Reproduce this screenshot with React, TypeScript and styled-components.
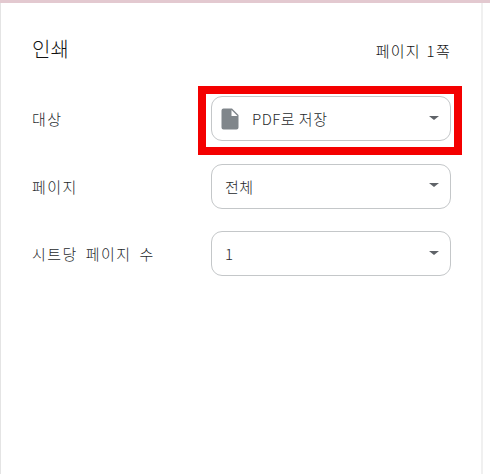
import styled, { createGlobalStyle } from 'styled-components'

const GlobalStyle = createGlobalStyle`
  html, body {
    margin: 0;
    background: #fff;
  }
  * {
    box-sizing: border-box;
  }
`

const Page = styled.div`
  width: 490px;
  height: 474px;
  overflow: hidden;
  display: flex;
  flex-direction: column;
  font-family: 'Noto Sans CJK KR', 'Liberation Sans', sans-serif;
  font-weight: 300;
  color: #26292c;
`

const TopBand = styled.div`
  height: 3px;
  background: #e3c9d0;
  flex-shrink: 0;
`

const Panel = styled.div`
  width: 483px;
  flex: 1;
  background: #fff;
  border-left: 1px solid #e4e4e4;
  border-right: 2px solid #f0f0f0;
  padding: 32px 30px 0 31px;
`

const Header = styled.header`
  display: flex;
  justify-content: space-between;
  align-items: center;
  height: 30px;
  margin-bottom: 31px;
`

const Title = styled.h1`
  margin: -4px 0 0;
  font-size: 20px;
  font-weight: 300;
  color: #111;
`

const PageCount = styled.span`
  font-size: 15px;
  letter-spacing: 1.3px;
  word-spacing: 1px;
  color: #111;
`

const Rows = styled.div`
  display: flex;
  flex-direction: column;
  gap: 22.5px;
`

const Row = styled.div`
  display: flex;
  align-items: center;
  justify-content: space-between;
  height: 45px;
`

const Label = styled.label`
  font-size: 15px;
  letter-spacing: 1.5px;
  word-spacing: 3px;
`

const SelectWrap = styled.div<{ $highlight?: boolean }>`
  position: relative;
  width: 240px;
  height: 45px;
  ${(p) =>
    p.$highlight &&
    `
    &::after {
      content: '';
      box-sizing: border-box;
      position: absolute;
      left: -13px;
      top: -10px;
      width: 264px;
      height: 69px;
      border: 8px solid #f40000;
      pointer-events: none;
    }
  `}
`

const Select = styled.div<{ $withIcon?: boolean }>`
  height: 100%;
  display: flex;
  align-items: center;
  padding-left: ${(p) => (p.$withIcon ? '9px' : '13px')};
  padding-right: 11px;
  border: 1px solid #c4c7c9;
  border-radius: 11px;
  background: #fff;
  font-size: 15px;
`

const FileIcon = styled.svg`
  width: 18px;
  height: 22px;
  margin-right: 13px;
  flex-shrink: 0;
`

const Value = styled.span`
  flex: 1;
  letter-spacing: 0.5px;
`

const Arrow = styled.span`
  width: 0;
  height: 0;
  border-left: 5px solid transparent;
  border-right: 5px solid transparent;
  border-top: 4px solid #5f6368;
  margin-top: -2px;
`

export default function App() {
  return (
    <Page>
      <GlobalStyle />
      <TopBand />
      <Panel>
        <Header>
          <Title>인쇄</Title>
          <PageCount>페이지 1쪽</PageCount>
        </Header>
        <Rows>
          <Row>
            <Label>대상</Label>
            <SelectWrap $highlight>
              <Select $withIcon>
                <FileIcon viewBox="0 0 18 22">
                  <path
                    d="M2.5 0.5H11L17.5 7V19.5a2 2 0 0 1-2 2H2.5a2 2 0 0 1-2-2V2.5a2 2 0 0 1 2-2Z"
                    fill="#80868b"
                  />
                  <path d="M10.5 2V8H16.5Z" fill="#fff" />
                </FileIcon>
                <Value>PDF로 저장</Value>
                <Arrow />
              </Select>
            </SelectWrap>
          </Row>
          <Row>
            <Label>페이지</Label>
            <SelectWrap>
              <Select>
                <Value>전체</Value>
                <Arrow />
              </Select>
            </SelectWrap>
          </Row>
          <Row>
            <Label>시트당 페이지 수</Label>
            <SelectWrap>
              <Select>
                <Value>1</Value>
                <Arrow />
              </Select>
            </SelectWrap>
          </Row>
        </Rows>
      </Panel>
    </Page>
  )
}
